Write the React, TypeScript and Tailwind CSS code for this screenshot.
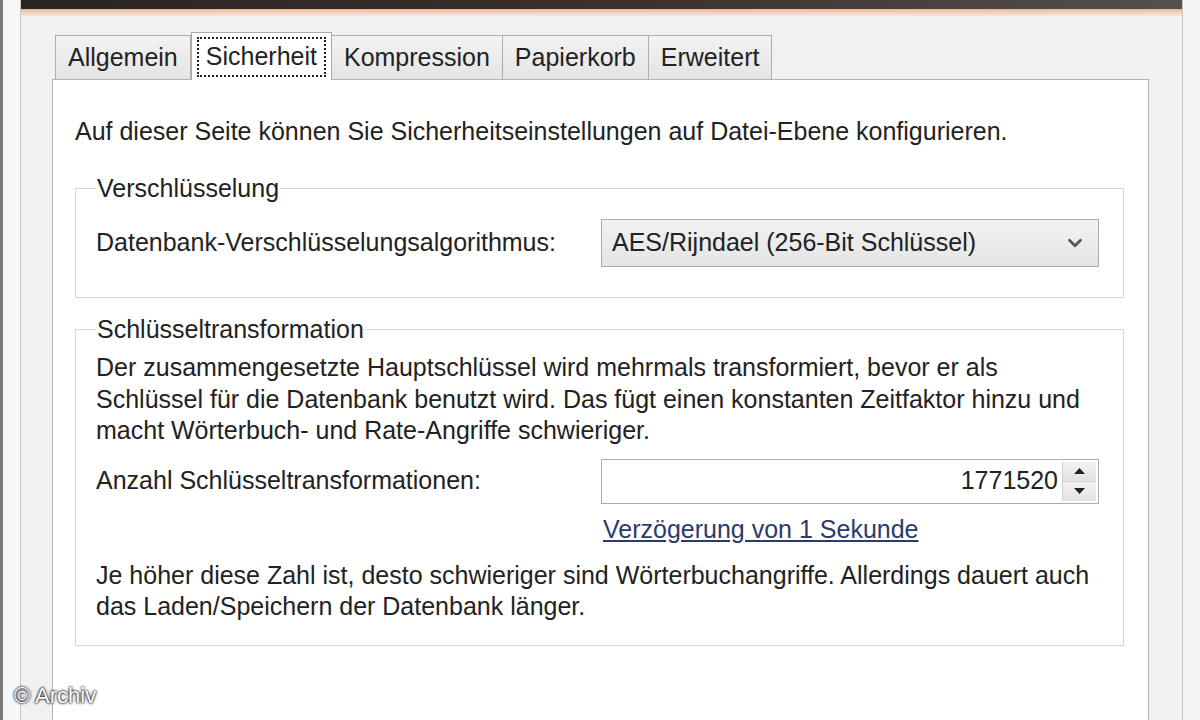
import { ChevronDown } from "lucide-react";

const tabs = ["Allgemein", "Sicherheit", "Kompression", "Papierkorb", "Erweitert"];

function Tab({ label, active }: { label: string; active?: boolean }) {
  if (active) {
    return (
      <div className="relative z-10 -mb-px h-[48px] border border-b-0 border-[#a9a9a9] bg-white px-[5px] pt-[4px]">
        <div className="flex h-[40px] items-center border-2 border-dotted border-[#222] px-[7px]">{label}</div>
      </div>
    );
  }
  return (
    <div className="-ml-px flex h-[44px] items-center border border-b-0 border-[#adadad] bg-gradient-to-b from-[#f3f3f3] to-[#e4e4e4] px-[12px] first:ml-0">
      {label}
    </div>
  );
}

function Spinner() {
  return (
    <div className="flex w-[34px] flex-col border-l border-[#cfcfcf]">
      <div className="flex flex-1 items-center justify-center border-b border-[#cfcfcf] bg-gradient-to-b from-[#f2f2f2] to-[#e2e2e2]">
        <svg width="11" height="6" viewBox="0 0 11 6"><path d="M5.5 0L11 6H0Z" fill="#222" /></svg>
      </div>
      <div className="flex flex-1 items-center justify-center bg-gradient-to-b from-[#f2f2f2] to-[#e2e2e2]">
        <svg width="11" height="6" viewBox="0 0 11 6"><path d="M0 0H11L5.5 6Z" fill="#222" /></svg>
      </div>
    </div>
  );
}

export default function App() {
  return (
    <div className="relative flex h-[720px] w-[1200px] overflow-hidden bg-[#f2f1ef] font-['Liberation_Sans',Arial,sans-serif] text-[25px] text-[#222]">
      {/* left window frame */}
      <div className="w-[21px] shrink-0 border-l-[3px] border-r border-l-[#7a7a7a] border-r-[#c8c8c8] bg-[#f5f7f9]" />

      <div className="flex flex-1 flex-col">
        <div className="h-[9px] bg-gradient-to-r from-[#2a2420] via-[#3b302a] to-[#55504c]" />
        <div className="h-[8px] bg-gradient-to-b from-[#e9b896] to-[#f2f1ef]" />

        <div className="flex flex-1 flex-col pl-[31px] pr-[33px] pt-[15px]">
          <div className="flex items-end pl-[3px]">
            {tabs.map((t) => (
              <Tab key={t} label={t} active={t === "Sicherheit"} />
            ))}
          </div>

          <div className="flex-1 border border-b-0 border-[#b3b3b3] bg-white pl-[22px] pr-[24px] pt-[36px]">
            <p className="leading-[30px]">
              Auf dieser Seite können Sie Sicherheitseinstellungen auf Datei-Ebene konfigurieren.
            </p>

            <fieldset className="mt-[29px] border border-[#d6d6d6] px-[20px] pb-[30px]">
              <legend className="px-[1px] leading-[26px]">Verschlüsselung</legend>
              <div className="mt-[18px] flex items-center">
                <span className="w-[505px]">Datenbank-Verschlüsselungsalgorithmus:</span>
                <div className="flex h-[48px] w-[498px] items-center justify-between border border-[#acacac] bg-gradient-to-b from-[#f2f2f2] to-[#e5e5e5] pl-[10px] pr-[12px]">
                  <span>AES/Rijndael (256-Bit Schlüssel)</span>
                  <ChevronDown size={22} strokeWidth={3} className="text-[#555]" />
                </div>
              </div>
            </fieldset>

            <fieldset className="mt-[18px] border border-[#d6d6d6] px-[20px] pb-[22px]">
              <legend className="px-[1px] leading-[26px]">Schlüsseltransformation</legend>
              <p className="mt-[10px] leading-[31.5px]">
                Der zusammengesetzte Hauptschlüssel wird mehrmals transformiert, bevor er als
                <br />
                Schlüssel für die Datenbank benutzt wird. Das fügt einen konstanten Zeitfaktor hinzu und
                <br />
                macht Wörterbuch- und Rate-Angriffe schwieriger.
              </p>
              <div className="mt-[12px] flex items-center">
                <span className="w-[505px]">Anzahl Schlüsseltransformationen:</span>
                <div className="flex h-[45px] w-[498px] border border-[#acacac] bg-white p-[2px]">
                  <div className="flex flex-1 items-center justify-end pr-[4px]">1771520</div>
                  <Spinner />
                </div>
              </div>
              <div className="mt-[10px] pl-[507px] leading-[30px]">
                <a className="text-[#2d3b6a] underline underline-offset-2">Verzögerung von 1 Sekunde</a>
              </div>
              <p className="mt-[16px] leading-[31.5px]">
                Je höher diese Zahl ist, desto schwieriger sind Wörterbuchangriffe. Allerdings dauert auch
                <br />
                das Laden/Speichern der Datenbank länger.
              </p>
            </fieldset>
          </div>
        </div>
      </div>

      {/* right window frame */}
      <div className="w-[18px] shrink-0 border-l border-[#c4c4c4] bg-[#f6f4f2]" />

      <div className="absolute bottom-[8px] left-[14px] text-[22px] text-white [text-shadow:0_0_3px_#000,0_0_2px_#000]">
        © Archiv
      </div>
    </div>
  );
}
